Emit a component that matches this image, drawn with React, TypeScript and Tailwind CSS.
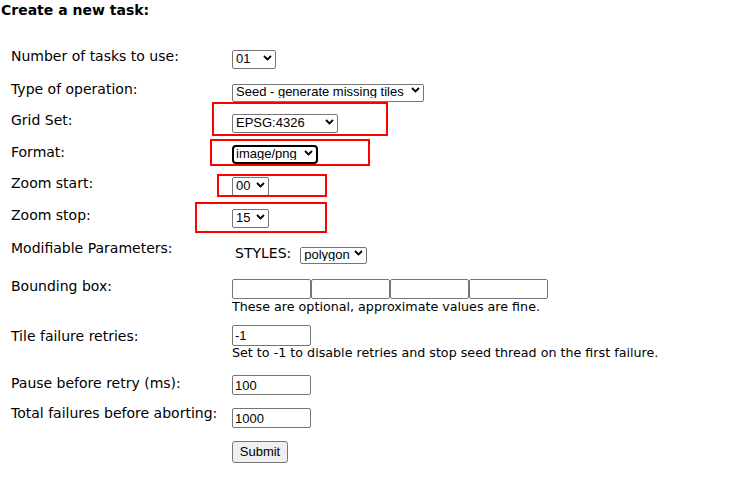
import React from 'react';

type SelectProps = {
  value: string;
  className: string;
  focused?: boolean;
};

function Chevron({ className }: { className: string }) {
  return (
    <svg
      className={`pointer-events-none absolute top-1/2 -translate-y-1/2 ${className}`}
      width="9"
      height="6"
      viewBox="0 0 9 6"
    >
      <path d="M1 1l3.5 3.5L8 1" fill="none" stroke="#000" strokeWidth="1.8" />
    </svg>
  );
}

function Select({ value, className, focused }: SelectProps) {
  return (
    <div className={`relative shrink-0 ${className}`}>
      <select
        defaultValue={value}
        className={`h-full w-full appearance-none bg-white pb-[2px] pr-[14px] font-['Liberation_Sans',Arial,sans-serif] text-[13px] leading-none text-black outline-none ${
          focused
            ? 'rounded-[4px] border-2 border-black pl-[2px]'
            : 'rounded-[2px] border border-[#767676] pl-[3px]'
        }`}
      >
        <option>{value}</option>
      </select>
      <Chevron className={focused ? 'right-[5px]' : 'right-[4px]'} />
    </div>
  );
}

function TextInput({ value = '', className = 'h-[20px]' }: { value?: string; className?: string }) {
  return (
    <input
      type="text"
      defaultValue={value}
      className={`w-[79px] shrink-0 rounded-[2px] border border-[#767676] bg-white px-[2px] font-['Liberation_Sans',Arial,sans-serif] text-[13px] text-black outline-none ${className}`}
    />
  );
}

function Label({ children, className = '' }: { children: React.ReactNode; className?: string }) {
  return <div className={`w-[232px] shrink-0 pl-[11px] leading-[16px] ${className}`}>{children}</div>;
}

export default function App() {
  return (
    <div className="relative h-[479px] w-[736px] overflow-hidden bg-white font-['DejaVu_Sans',Verdana,sans-serif] text-[14px] text-black">
      <div className="pt-[2px]">
        <h2 className="pl-[1px] text-[14px] font-bold leading-[16px]">Create a new task:</h2>

        <form className="mt-[30px] flex flex-col" onSubmit={(e) => e.preventDefault()}>
          <div className="flex h-[33px] items-start">
            <Label>Number of tasks to use:</Label>
            <Select value="01" className="h-[19px] w-[44px]" />
          </div>

          <div className="flex h-[31px] items-start">
            <Label>Type of operation:</Label>
            <Select value="Seed - generate missing tiles" className="h-[18px] w-[192px]" />
          </div>

          <div className="flex h-[31px] items-start">
            <Label>Grid Set:</Label>
            <Select value="EPSG:4326" className="h-[19px] w-[106px]" />
          </div>

          <div className="flex h-[32px] items-start">
            <Label className="mt-[1px]">Format:</Label>
            <Select value="image/png" focused className="h-[19px] w-[86px]" />
          </div>

          <div className="flex h-[32px] items-start">
            <Label>Zoom start:</Label>
            <Select value="00" className="h-[19px] w-[37px]" />
          </div>

          <div className="flex h-[33px] items-start">
            <Label>Zoom stop:</Label>
            <Select value="15" className="h-[19px] w-[37px]" />
          </div>

          <div className="flex h-[38px] items-start">
            <Label>Modifiable Parameters:</Label>
            <div className="mt-[4px] flex items-center gap-[9px] pl-[3px]">
              <span className="leading-[16px]">STYLES:</span>
              <Select value="polygon" className="h-[17px] w-[67px]" />
            </div>
          </div>

          <div className="flex h-[47px] items-start">
            <Label>Bounding box:</Label>
            <div className="mt-[1px] flex flex-col">
              <div className="flex">
                <TextInput />
                <TextInput />
                <TextInput />
                <TextInput />
              </div>
              <p className="text-[12.7px] leading-[16px]">
                These are optional, approximate values are fine.
              </p>
            </div>
          </div>

          <div className="flex h-[50px] items-start">
            <Label className="mt-[3px]">Tile failure retries:</Label>
            <div className="flex flex-col">
              <TextInput value="-1" className="h-[21px]" />
              <p className="-mt-[1px] text-[12.7px] leading-[16px]">
                Set to -1 to disable retries and stop seed thread on the first failure.
              </p>
            </div>
          </div>

          <div className="flex h-[30px] items-start">
            <Label>Pause before retry (ms):</Label>
            <TextInput value="100" />
          </div>

          <div className="flex h-[36px] items-start">
            <Label>Total failures before aborting:</Label>
            <TextInput value="1000" className="mt-[3px] h-[20px]" />
          </div>

          <div className="flex items-start">
            <div className="w-[232px] shrink-0" />
            <button
              type="submit"
              className="h-[22px] w-[56px] rounded-[3px] border border-[#767676] bg-[#efefef] font-['Liberation_Sans',Arial,sans-serif] text-[13px] text-black"
            >
              Submit
            </button>
          </div>
        </form>
      </div>

      {/* annotation boxes drawn over the form */}
      <div className="pointer-events-none absolute left-[212px] top-[102px] h-[34px] w-[176px] border-2 border-[#ff0000]" />
      <div className="pointer-events-none absolute left-[210px] top-[139px] h-[27px] w-[160px] border-2 border-[#ff0000]" />
      <div className="pointer-events-none absolute left-[217px] top-[174px] h-[23px] w-[110px] border-2 border-[#ff0000]" />
      <div className="pointer-events-none absolute left-[195px] top-[202px] h-[31px] w-[132px] border-2 border-[#ff0000]" />
    </div>
  );
}
